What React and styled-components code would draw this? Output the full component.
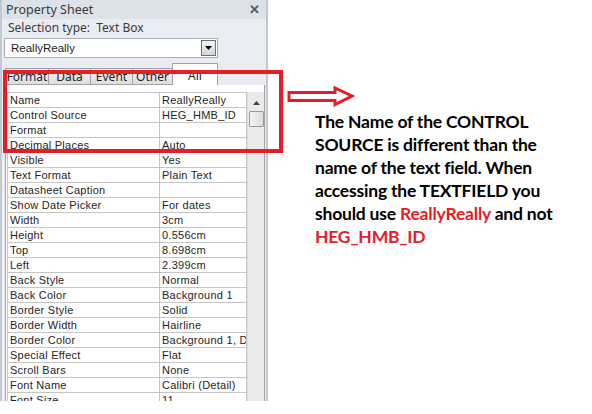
import React from "react";
import styled, { createGlobalStyle } from "styled-components";

const Global = createGlobalStyle`
  html, body { margin: 0; padding: 0; background: #ffffff; }
  body { font-family: "Noto Sans", "Open Sans", sans-serif; }
`;

const Page = styled.div`
  position: relative;
  width: 592px;
  height: 414px;
  overflow: hidden;
  display: flex;
  align-items: flex-start;
  background: #ffffff;
`;

const Panel = styled.div`
  width: 264px;
  height: 401px;
  overflow: hidden;
  flex: none;
  display: flex;
  flex-direction: column;
  background: #e9edf2;
  border-left: 2px solid #c3c9d1;
  border-right: 2px solid #c3c9d1;
  font-family: "Noto Sans", sans-serif;
  color: #1e1e1e;
`;

const TitleBar = styled.div`
  height: 19px;
  flex: none;
  display: flex;
  align-items: center;
  justify-content: space-between;
  padding: 0 6px 0 4px;
  background: #dde2e8;
  font-size: 12.5px;
  color: #3b3b3b;
`;

const Close = styled.span`
  font-size: 13px;
  font-weight: bold;
  color: #555a60;
  line-height: 1;
`;

const SelType = styled.div`
  height: 17px;
  flex: none;
  display: flex;
  align-items: center;
  padding-left: 6px;
  font-size: 12px;
  color: #3b3b3b;
  white-space: pre;
`;

const Combo = styled.div`
  margin: 2px 0 0 2px;
  height: 18px;
  flex: none;
  display: flex;
  align-items: center;
  justify-content: space-between;
  background: #ffffff;
  border: 1px solid #a9adb4;
  padding-left: 6px;
  box-sizing: content-box;
  width: 206px;
  font-family: "Liberation Sans", sans-serif;
  font-size: 11.5px;
`;

const ComboButton = styled.div`
  width: 13px;
  height: 14px;
  margin-right: 1px;
  border: 1px solid #6f6f6f;
  background: linear-gradient(#f2f2f2, #d6d6d6);
  display: flex;
  align-items: center;
  justify-content: center;
`;

const TabRow = styled.div`
  margin-top: 5px;
  height: 22px;
  flex: none;
  display: flex;
  align-items: flex-end;
  padding-left: 4px;
`;

const Tab = styled.div`
  height: ${(p) => (p.$active ? 22 : 17)}px;
  width: ${(p) => p.$w}px;
  box-sizing: border-box;
  border: 1px solid #a3a3a3;
  border-bottom: ${(p) => (p.$active ? "none" : "1px solid #a3a3a3")};
  margin-left: -1px;
  background: ${(p) => (p.$active ? "#ffffff" : "linear-gradient(#f3f3f3, #dedede)")};
  font-size: 12px;
  display: flex;
  align-items: ${(p) => (p.$active ? "flex-start" : "center")};
  justify-content: center;
  padding-top: ${(p) => (p.$active ? 3 : 0)}px;
  color: #1e1e1e;
`;

const TabPage = styled.div`
  margin-left: 3px;
  width: 257px;
  flex: 1;
  background: #ffffff;
  border: 1px solid #a3a3a3;
  border-top: none;
  padding: 7px 0 0 1px;
  display: flex;
  align-items: flex-start;
`;

const Grid = styled.div`
  width: 239px;
  flex: none;
  border-top: 1px solid #c5c5c5;
  border-left: 1px solid #c5c5c5;
  display: grid;
  grid-template-columns: 152px 87px;
`;

const Cell = styled.div`
  height: 14px;
  box-sizing: content-box;
  border-right: 1px solid #c5c5c5;
  border-bottom: 1px solid #c5c5c5;
  padding-left: 2px;
  font-family: "Liberation Sans", sans-serif;
  font-size: 11px;
  letter-spacing: 0.25px;
  line-height: 14px;
  white-space: nowrap;
  overflow: hidden;
  color: #1e1e1e;
`;

const ScrollBar = styled.div`
  width: 16px;
  height: 320px;
  padding-top: 2px;
  background: #eaeaea;
  border-left: 1px solid #dcdcdc;
  display: flex;
  flex-direction: column;
  align-items: center;
`;

const ScrollArrow = styled.div`
  height: 17px;
  display: flex;
  align-items: center;
  justify-content: center;
`;

const Thumb = styled.div`
  width: 13px;
  height: 14px;
  border: 1px solid #9a9a9a;
  border-radius: 1px;
  background: linear-gradient(90deg, #f4f4f4, #dcdcdc);
`;

const Highlight = styled.div`
  position: absolute;
  left: 3px;
  top: 70px;
  width: 272px;
  height: 75px;
  border: 4px solid #e31e26;
  pointer-events: none;
`;

const Note = styled.div`
  flex: 1;
  display: flex;
  flex-direction: column;
`;

const Arrow = styled.svg`
  margin: 86px 0 0 19px;
  display: block;
`;

const Text = styled.div`
  margin: 3px 0 0 47px;
  font-family: "Lato", "Open Sans", sans-serif;
  font-weight: bold;
  font-size: 17.5px;
  letter-spacing: -0.2px;
  line-height: 22.9px;
  color: #000000;
  white-space: nowrap;
`;

const Red = styled.span`
  color: #e31e26;
`;

const rows = [
  ["Name", "ReallyReally"],
  ["Control Source", "HEG_HMB_ID"],
  ["Format", ""],
  ["Decimal Places", "Auto"],
  ["Visible", "Yes"],
  ["Text Format", "Plain Text"],
  ["Datasheet Caption", ""],
  ["Show Date Picker", "For dates"],
  ["Width", "3cm"],
  ["Height", "0.556cm"],
  ["Top", "8.698cm"],
  ["Left", "2.399cm"],
  ["Back Style", "Normal"],
  ["Back Color", "Background 1"],
  ["Border Style", "Solid"],
  ["Border Width", "Hairline"],
  ["Border Color", "Background 1, Darker"],
  ["Special Effect", "Flat"],
  ["Scroll Bars", "None"],
  ["Font Name", "Calibri (Detail)"],
  ["Font Size", "11"],
];

const tabs = [
  ["Format", 44],
  ["Data", 43],
  ["Event", 43],
  ["Other", 41],
  ["All", 46, true],
];

export default function App() {
  return (
    <>
      <Global />
      <Page>
        <Panel>
          <TitleBar>
            <span>Property Sheet</span>
            <Close>✕</Close>
          </TitleBar>
          <SelType>{"Selection type:  Text Box"}</SelType>
          <Combo>
            <span>ReallyReally</span>
            <ComboButton>
              <svg width="7" height="4" viewBox="0 0 7 4">
                <path d="M0 0H7L3.5 4Z" fill="#000" />
              </svg>
            </ComboButton>
          </Combo>
          <TabRow>
            {tabs.map(([t, w, a]) => (
              <Tab key={t} $w={w} $active={a}>
                {t}
              </Tab>
            ))}
          </TabRow>
          <TabPage>
            <Grid>
              {rows.map(([k, v]) => (
                <React.Fragment key={k}>
                  <Cell>{k}</Cell>
                  <Cell>{v}</Cell>
                </React.Fragment>
              ))}
            </Grid>
            <ScrollBar>
              <ScrollArrow>
                <svg width="7" height="4" viewBox="0 0 7 4">
                  <path d="M0 4H7L3.5 0Z" fill="#444" />
                </svg>
              </ScrollArrow>
              <Thumb />
            </ScrollBar>
          </TabPage>
        </Panel>
        <Note>
          <Arrow width="68" height="22" viewBox="0 0 68 22">
            <path
              d="M2 6.5H48V2L65 10L48 18.5V14.5H2Z"
              fill="#ffffff"
              stroke="#e31e26"
              strokeWidth="3"
              strokeLinejoin="miter"
            />
          </Arrow>
          <Text>
            The Name of the CONTROL
            <br />
            SOURCE is different than the
            <br />
            name of the text field. When
            <br />
            accessing the TEXTFIELD you
            <br />
            should use <Red>ReallyReally</Red> and not
            <br />
            <Red>HEG_HMB_ID</Red>
          </Text>
        </Note>
        <Highlight />
      </Page>
    </>
  );
}
